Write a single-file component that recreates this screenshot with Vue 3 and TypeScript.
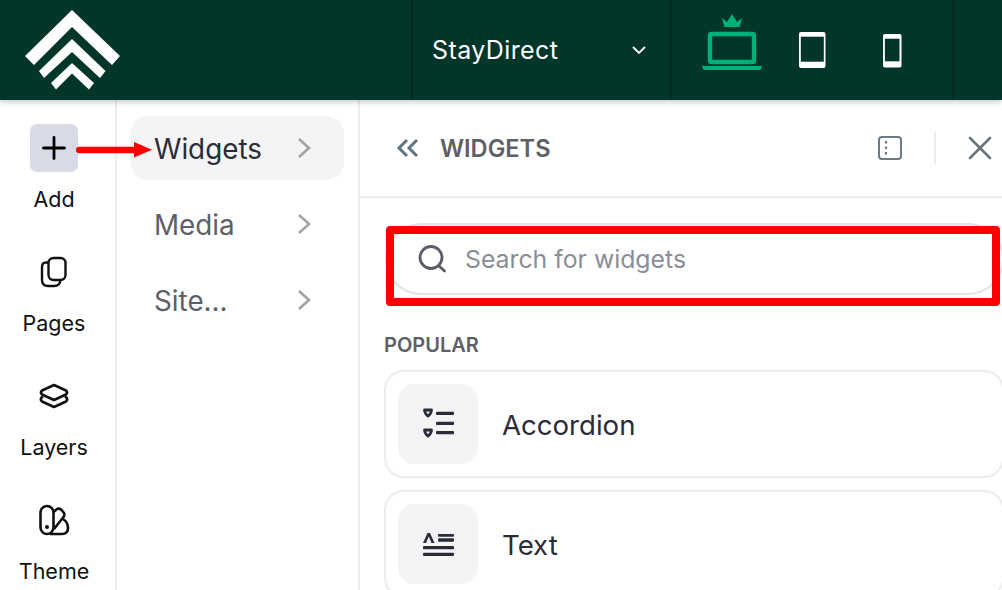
<script setup lang="ts">
interface RailItem { label: string; kind: string }
const rail: RailItem[] = [
  { label: 'Add', kind: 'add' },
  { label: 'Pages', kind: 'pages' },
  { label: 'Layers', kind: 'layers' },
  { label: 'Theme', kind: 'theme' },
]
const menu: string[] = ['Widgets', 'Media', 'Site...']
</script>

<template>
  <div class="page">
    <header class="top">
      <div class="logo-cell">
        <svg class="logo" width="144" height="100" viewBox="0 0 144 100">
          <path fill="#fff" d="M72 10 L120 56 L112 65 L72 27 L34 65 L25 56Z" />
          <path fill="#fff" d="M72 39 L105.500 71 L100 78 L72 52 L44 78 L39 71Z" />
          <path fill="#fff" d="M72 63 L94 83 L89 89.500 L72 73.500 L56 89.500 L51 83Z" />
        </svg>
      </div>
      <div class="site-cell">
        <span class="site-name">StayDirect</span>
        <svg width="16" height="10" viewBox="0 0 16 10" fill="none" stroke="#fff" stroke-width="1.8">
          <path d="M2 2 L8 8 L14 2" />
        </svg>
      </div>
      <div class="device-cell">
        <svg width="62" height="72" viewBox="0 0 62 72" class="dev-laptop">
          <path fill="#00b27a" d="M22 9 L27 13 L32 5 L37 13 L42 9 L39.500 18 H24.500Z" />
          <rect x="10" y="25" width="44" height="28" rx="1.500" fill="none" stroke="#00b27a" stroke-width="4.400" />
          <path fill="#00b27a" d="M2 57 H62 L61 60 Q60.500 61 59 61 H5 Q3.500 61 3 60Z" />
        </svg>
        <svg width="28" height="38" viewBox="0 0 28 38" class="dev-tablet">
          <rect x="1" y="1" width="26.500" height="36" rx="2" fill="#fff" />
          <rect x="2.800" y="5.700" width="23" height="25" fill="#02362a" />
        </svg>
        <svg width="20" height="36" viewBox="0 0 20 36" class="dev-phone">
          <rect x="1" y="1" width="18.500" height="33.500" rx="2" fill="#fff" />
          <rect x="2.900" y="5.700" width="14.600" height="22.600" fill="#02362a" />
        </svg>
      </div>
      <div class="end-cell"></div>
    </header>

    <div class="body">
      <nav class="rail">
        <div v-for="item in rail" :key="item.label" class="rail-item">
          <div class="rail-icon" :class="{ active: item.kind === 'add' }">
            <svg v-if="item.kind === 'add'" width="26" height="26" viewBox="0 0 26 26" stroke="#000" stroke-width="2.800" stroke-linecap="round">
              <path d="M13 2.500 V23.500 M2.500 13 H23.500" />
            </svg>
            <svg v-else-if="item.kind === 'pages'" width="30" height="32" viewBox="0 0 30 32" fill="none" stroke="#111" stroke-width="2.400">
              <rect x="9.500" y="2" width="17" height="22" rx="5" />
              <path d="M9.500 6.500 H7 Q3 6.500 3 11 V24 Q3 30 9 30 H15 Q21 30 21.500 24" />
            </svg>
            <svg v-else-if="item.kind === 'layers'" width="32" height="28" viewBox="0 0 32 28" fill="none" stroke="#111" stroke-width="2.600" stroke-linejoin="round">
              <path d="M16 3 L28 8.500 Q30 10.500 28 12.500 L16 18 L4 12.500 Q2 10.500 4 8.500Z" />
              <path d="M5 14.500 L3.500 15.500 Q2 18 4 19.500 L16 25 L28 19.500 Q30 18 28.500 15.500 L27 14.500" />
            </svg>
            <svg v-else width="32" height="32" viewBox="0 0 32 32" fill="none" stroke="#111" stroke-width="2.600">
              <rect x="2.500" y="2" width="13" height="28" rx="6.500" />
              <path d="M15.500 8 L19 5 Q21 4 23 5.500 L26 9 Q27 11 25.500 13 L16 25" />
              <path d="M12 30 H24 Q30 30 30 24 Q30 18 25 15" />
              <circle cx="9" cy="23" r="2" fill="#111" stroke="none" />
            </svg>
          </div>
          <span class="rail-label">{{ item.label }}</span>
        </div>
      </nav>

      <aside class="menu">
        <div v-for="(m, i) in menu" :key="m" class="menu-item" :class="{ on: i === 0 }">
          <span class="menu-text">{{ m }}</span>
          <svg width="14" height="22" viewBox="0 0 14 22" fill="none" stroke="#a3a3a6" stroke-width="2.600">
            <path d="M2 2 L12 11 L2 20" />
          </svg>
        </div>
      </aside>

      <section class="panel">
        <div class="panel-head">
          <svg width="24" height="20" viewBox="0 0 24 20" fill="none" stroke="#5f7480" stroke-width="3">
            <path d="M11 2 L3 10 L11 18 M21 2 L13 10 L21 18" />
          </svg>
          <span class="panel-title">WIDGETS</span>
          <span class="spacer"></span>
          <svg width="24" height="24" viewBox="0 0 24 24" fill="none" stroke="#6b7b82" stroke-width="2">
            <rect x="1" y="1" width="22" height="22" rx="3" />
            <path d="M8 5 V19" stroke-dasharray="2.500 3" stroke-width="2.200" />
          </svg>
          <span class="head-div"></span>
          <svg width="24" height="24" viewBox="0 0 24 24" stroke="#64777e" stroke-width="2.600" stroke-linecap="round">
            <path d="M2 2 L22 22 M22 2 L2 22" />
          </svg>
        </div>

        <div class="panel-body">
          <div class="search">
            <svg width="30" height="30" viewBox="0 0 30 30" fill="none" stroke="#5a5c66" stroke-width="2.800" stroke-linecap="round">
              <circle cx="14" cy="13.500" r="11" />
              <path d="M22 22 L27.500 27" />
            </svg>
            <span class="placeholder">Search for widgets</span>
          </div>
          <div class="section-label">POPULAR</div>

          <div class="card">
            <div class="card-icon">
              <svg width="32" height="32" viewBox="0 0 32 32" fill="#2a2c38">
                <path fill="none" stroke="#2a2c38" stroke-width="2.800" stroke-linejoin="round" d="M2.500 2 H9.500 Q9.200 5.800 6 8 Q2.800 5.800 2.500 2Z" />
                <path fill="none" stroke="#2a2c38" stroke-width="2.800" stroke-linejoin="round" d="M2.500 22 H9.500 Q9.200 25.800 6 28 Q2.800 25.800 2.500 22Z" />
                <rect x="14" y="3.700" width="18" height="3.300" rx="1" />
                <rect x="14" y="13.700" width="18" height="3.300" rx="1" />
                <rect x="14" y="23" width="18" height="3.300" rx="1" />
              </svg>
            </div>
            <span class="card-text">Accordion</span>
          </div>

          <div class="card">
            <div class="card-icon">
              <svg width="32" height="26" viewBox="0 0 32 26" fill="#2a2c38">
                <path d="M1 12 L5.500 2 H8 L12.500 12 H9.500 L6.800 5.500 L4 12Z" />
                <rect x="16" y="3" width="16" height="2.700" rx="1" />
                <rect x="16" y="7.300" width="16" height="3.400" rx="1" />
                <rect x="1" y="15" width="31" height="3.300" rx="1" />
                <rect x="1" y="21.700" width="31" height="3.300" rx="1" />
              </svg>
            </div>
            <span class="card-text">Text</span>
          </div>
        </div>
      </section>
    </div>

    <div class="mark-rect"></div>
    <svg class="mark-arrow" width="76" height="16" viewBox="0 0 76 16">
      <path fill="#f00" d="M3.500 4.700 H58 V0 L76 7.800 L58 15.500 V11.300 H3.500 Q0 11.300 0 8 Q0 4.700 3.500 4.700Z" />
    </svg>
  </div>
</template>

<style>
html, body { margin: 0; padding: 0; background: #fff; }
</style>

<style scoped>
.page {
  position: relative;
  width: 1002px;
  height: 590px;
  overflow: hidden;
  font-family: Inter, "Noto Sans", sans-serif;
  background: #fff;
}
.top {
  position: relative;
  z-index: 2;
  display: flex;
  height: 100px;
  background: #02362a;
  box-shadow: 0 2px 6px rgba(0, 0, 0, 0.22);
}
.logo-cell { width: 411px; flex: none; }
.logo { display: block; }
.site-cell {
  width: 261px;
  flex: none;
  box-sizing: border-box;
  border-left: 2px solid #012a20;
  border-right: 2px solid #012a20;
  display: flex;
  align-items: center;
  justify-content: space-between;
  padding: 0 23px 0 19px;
  color: #fff;
}
.site-name { font-size: 25px; letter-spacing: 0.4px; }
.device-cell {
  width: 280px;
  flex: none;
  display: flex;
  align-items: flex-start;
  box-sizing: border-box;
  padding-left: 28px;
}
.dev-laptop { margin-top: 9px; }
.dev-tablet { margin: 31px 0 0 36px; }
.dev-phone { margin: 33px 0 0 56px; }
.end-cell { flex: 1; border-left: 2px solid #012a20; }

.body { display: flex; height: 490px; }
.rail {
  width: 117px;
  flex: none;
  box-sizing: border-box;
  border-right: 2px solid #ededee;
  padding: 24px 7px 0 0;
  display: flex;
  flex-direction: column;
  gap: 20px;
}
.rail-item {
  height: 104px;
  display: flex;
  flex-direction: column;
  align-items: center;
  flex: none;
}
.rail-icon {
  width: 48px;
  height: 48px;
  border-radius: 7px;
  display: flex;
  align-items: center;
  justify-content: center;
}
.rail-icon.active { background: #d8dbe6; }
.rail-label { margin-top: 14px; font-size: 21.5px; line-height: 26px; color: #111; }

.menu {
  width: 243px;
  flex: none;
  box-sizing: border-box;
  border-right: 2px solid #ededee;
  padding: 16px 14px 0 13px;
  display: flex;
  flex-direction: column;
  gap: 12px;
}
.menu-item {
  height: 64px;
  border-radius: 18px;
  display: flex;
  align-items: center;
  justify-content: space-between;
  padding: 0 33px 0 24px;
  color: #5e6068;
}
.menu-item.on { background: #f4f4f7; color: #2a2c38; }
.menu-text { font-size: 27.8px; font-weight: 430; padding-top: 2px; }

.panel { flex: 1; min-width: 0; }
.panel-head {
  height: 98px;
  box-sizing: border-box;
  border-bottom: 2px solid #ededee;
  display: flex;
  align-items: center;
  padding: 0 10px 0 36px;
}
.panel-title {
  margin-left: 20px;
  font-size: 23.6px;
  font-weight: 600;
  color: #5e6068;
}
.spacer { flex: 1; }
.head-div { width: 2px; height: 32px; background: #ededee; margin: 0 32px 0 32px; }

.panel-body { padding: 25px 0 0 24px; }
.search {
  box-sizing: border-box;
  height: 72px;
  margin: 0 -2px 0 1px;
  border: 2px solid #e3e3e3;
  border-radius: 36px;
  display: flex;
  align-items: center;
  padding-left: 30px;
  gap: 18px;
}
.placeholder { font-size: 24.8px; color: #8a8d99; }
.section-label { margin-top: 38px; font-size: 20px; line-height: 24px; font-weight: 600; color: #5e6068; }
.card {
  box-sizing: border-box;
  height: 108px;
  margin: 13px -2px 0 0;
  border: 2px solid #ededee;
  border-radius: 20px;
  display: flex;
  align-items: center;
  padding-left: 12px;
}
.card + .card { margin-top: 12px; }
.card-icon {
  width: 80px;
  height: 80px;
  border-radius: 16px;
  background: #f4f4f7;
  display: flex;
  align-items: center;
  justify-content: center;
}
.card-text { margin-left: 24px; font-size: 27.6px; font-weight: 430; color: #2a2c38; padding-top: 2px; }

.mark-rect {
  position: absolute;
  z-index: 3;
  left: 386px;
  top: 226px;
  width: 614px;
  height: 80px;
  box-sizing: border-box;
  border: 8px solid #f00;
  border-radius: 4px;
}
.mark-arrow { position: absolute; z-index: 3; left: 76px; top: 142px; }
</style>
